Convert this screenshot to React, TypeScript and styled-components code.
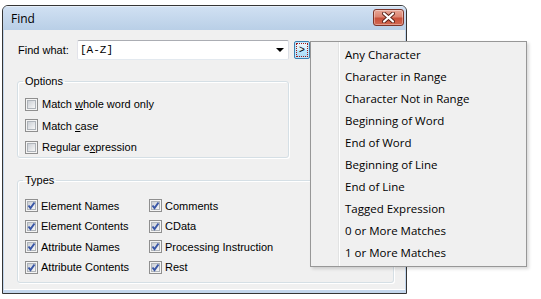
import React from "react";
import styled, { createGlobalStyle } from "styled-components";

const GlobalStyle = createGlobalStyle`
  html, body { margin: 0; padding: 0; background: #ffffff; }
  body { font-family: "Liberation Sans", Arial, sans-serif; font-size: 11px; color: #000; }
  * { box-sizing: border-box; }
`;

const Stage = styled.div`
  position: relative;
  width: 541px;
  height: 299px;
  padding: 5px 0 0 2px;
`;

const Window = styled.div`
  width: 405px;
  height: 289px;
  border: 1px solid #353535;
  border-radius: 6px 6px 0 0;
  background: #c3d6ec;
  display: flex;
  flex-direction: column;
  overflow: hidden;
`;

const TitleBar = styled.div`
  height: 24px;
  flex: none;
  display: flex;
  align-items: center;
  justify-content: space-between;
  padding: 0 2px 0 8px;
  background: linear-gradient(#d0e0f2, #b9cfe7);
  border-top: 1px solid #e6eef8;
`;

const Title = styled.span`
  font-family: "Open Sans", "Noto Sans", sans-serif;
  font-size: 12px;
  color: #000;
`;

const CloseButton = styled.div`
  width: 31px;
  height: 17px;
  margin-top: -2px;
  border: 1px solid #7d3428;
  border-radius: 3px;
  background: linear-gradient(#e8a797 0%, #dc8572 45%, #c8503a 55%, #d26a53 100%);
  box-shadow: inset 0 0 0 1px rgba(255, 255, 255, 0.35);
  display: flex;
  align-items: center;
  justify-content: center;
`;

const Client = styled.div`
  flex: 1;
  margin: 0 1px 3px 1px;
  background: #f0f0f0;
  border-bottom: 1px solid #ffffff;
  padding: 10px 0 0 13px;
  display: flex;
  flex-direction: column;
`;

const FindRow = styled.div`
  display: flex;
  align-items: center;
  height: 20px;
`;

const FieldLabel = styled.span`
  width: 60px;
  padding-left: 1px;
`;

const Combo = styled.div`
  width: 212px;
  height: 20px;
  background: #fff;
  border: 1px solid #abadb3;
  border-color: #abadb3 #dbdfe6 #e3e9ef #e2e3ea;
  border-radius: 2px;
  display: flex;
  align-items: center;
  justify-content: space-between;
  padding: 0 3px 0 2px;
`;

const ComboText = styled.span`
  font-family: "Liberation Mono", "Courier New", monospace;
  font-size: 11px;
`;

const ComboArrow = styled.span`
  width: 0;
  height: 0;
  border-left: 4px solid transparent;
  border-right: 4px solid transparent;
  border-top: 4px solid #000;
  margin-right: 1px;
`;

const ExprButton = styled.div`
  margin-left: 5px;
  width: 16px;
  height: 18px;
  border: 1px solid #3c7fb1;
  border-radius: 2px;
  background: linear-gradient(#eaf6fd, #d9f0fc 50%, #bee6fd 51%, #a7d9f5);
  box-shadow: inset 0 0 0 1px #c2e8fb;
  display: flex;
  align-items: center;
  justify-content: center;
  padding: 1px;
`;

const FocusRect = styled.div`
  width: 100%;
  height: 100%;
  border: 1px dotted #a01818;
  display: flex;
  align-items: center;
  justify-content: center;
  font-size: 10px;
  line-height: 1;
  color: #000;
`;

const GroupBox = styled.fieldset<{ $width: number; $top: number }>`
  width: ${(p) => p.$width}px;
  margin: ${(p) => p.$top}px 0 0 0;
  padding: 0 0 0 7px;
  border: 1px solid #d5dfe5;
  border-radius: 3px;
  box-shadow: inset 1px 1px 0 #fff, 1px 1px 0 #fff;
  min-inline-size: auto;
`;

const Legend = styled.legend`
  margin-left: -2px;
  padding: 0 2px;
  line-height: 13px;
  font-size: 11px;
`;

const OptionList = styled.div`
  display: grid;
  grid-template-rows: repeat(3, 18px);
  row-gap: 3.5px;
  padding: 7px 0 1px 0;
`;

const TypeGrid = styled.div`
  display: grid;
  grid-template-columns: 124px 150px;
  grid-template-rows: repeat(4, 18px);
  row-gap: 2.67px;
  padding: 9.5px 0 6px 0;
`;

const CheckRow = styled.label<{ $gap: number }>`
  display: flex;
  align-items: center;
  gap: ${(p) => p.$gap}px;
  white-space: nowrap;
`;

const Box = styled.span`
  width: 13px;
  height: 13px;
  flex: none;
  border: 1px solid #8f8f8f;
  background: #f4f4f4;
  padding: 1px;
  display: flex;
`;

const BoxFill = styled.span`
  flex: 1;
  border: 1px solid #aeb3b9;
  background: linear-gradient(135deg, #cbcfd5, #f7f7f7);
  position: relative;
`;

const CheckMark = styled.svg`
  position: absolute;
  left: -2px;
  top: -2px;
`;

const U = styled.span`
  text-decoration: underline;
  text-underline-offset: 1px;
`;

const Menu = styled.div`
  position: absolute;
  left: 310px;
  top: 41px;
  width: 217px;
  height: 226px;
  border: 1px solid #979797;
  padding: 2px;
  background: linear-gradient(
    to right,
    #f0f0f0 27px,
    #e2e3e3 27px,
    #e2e3e3 28px,
    #ffffff 28px,
    #ffffff 29px,
    #f0f0f0 29px
  );
  box-shadow: 2px 2px 3px rgba(0, 0, 0, 0.15);
`;

const MenuItem = styled.div`
  height: 22px;
  line-height: 22px;
  padding-left: 32px;
  font-family: "Open Sans", "Noto Sans", sans-serif;
  font-size: 11.5px;
  color: #000;
  white-space: nowrap;
`;

const Check: React.FC<{ checked?: boolean; children: React.ReactNode; gap?: number }> = ({
  checked,
  children,
  gap = 4,
}) => (
  <CheckRow $gap={gap}>
    <Box>
      <BoxFill>
        {checked && (
          <CheckMark width="11" height="11" viewBox="0 0 11 11">
            <path d="M2.5 5.5 L4.5 8 L8.5 2.5" fill="none" stroke="#3a57a6" strokeWidth="2" />
          </CheckMark>
        )}
      </BoxFill>
    </Box>
    <span>{children}</span>
  </CheckRow>
);

const menuItems = [
  "Any Character",
  "Character in Range",
  "Character Not in Range",
  "Beginning of Word",
  "End of Word",
  "Beginning of Line",
  "End of Line",
  "Tagged Expression",
  "0 or More Matches",
  "1 or More Matches",
];

export default function App() {
  return (
    <Stage>
      <GlobalStyle />
      <Window>
        <TitleBar>
          <Title>Find</Title>
          <CloseButton>
            <svg width="13" height="11" viewBox="0 0 13 11">
              <path
                d="M2 1.5 L11 9.5 M11 1.5 L2 9.5"
                stroke="#5a2319"
                strokeWidth="4"
                strokeLinecap="round"
              />
              <path d="M2 1.5 L11 9.5 M11 1.5 L2 9.5" stroke="#ffffff" strokeWidth="2.2" strokeLinecap="round" />
            </svg>
          </CloseButton>
        </TitleBar>
        <Client>
          <FindRow>
            <FieldLabel>Find what:</FieldLabel>
            <Combo>
              <ComboText>[A-Z]</ComboText>
              <ComboArrow />
            </Combo>
            <ExprButton>
              <FocusRect>&gt;</FocusRect>
            </ExprButton>
          </FindRow>
          <GroupBox $width={272} $top={15}>
            <Legend>Options</Legend>
            <OptionList>
              <Check>
                Match <U>w</U>hole word only
              </Check>
              <Check>
                Match <U>c</U>ase
              </Check>
              <Check>
                Regular e<U>x</U>pression
              </Check>
            </OptionList>
          </GroupBox>
          <GroupBox $width={377} $top={16}>
            <Legend>Types</Legend>
            <TypeGrid>
              <Check checked gap={3}>Element Names</Check>
              <Check checked gap={3}>Comments</Check>
              <Check checked gap={3}>Element Contents</Check>
              <Check checked gap={3}>CData</Check>
              <Check checked gap={3}>Attribute Names</Check>
              <Check checked gap={3}>Processing Instruction</Check>
              <Check checked gap={3}>Attribute Contents</Check>
              <Check checked gap={3}>Rest</Check>
            </TypeGrid>
          </GroupBox>
        </Client>
      </Window>
      <Menu>
        {menuItems.map((m) => (
          <MenuItem key={m}>{m}</MenuItem>
        ))}
      </Menu>
    </Stage>
  );
}
